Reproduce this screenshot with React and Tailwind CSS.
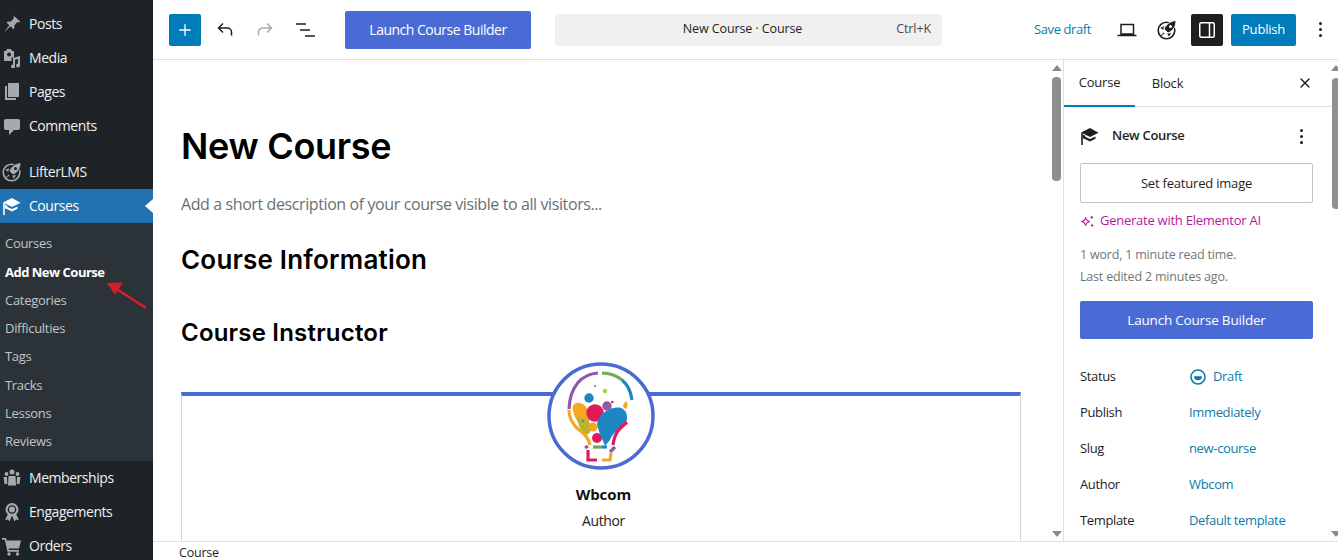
import { X, Plus } from 'lucide-react'

const BODY = "font-['Open_Sans',sans-serif]"

function PinIcon() {
  return (
    <svg viewBox="0 0 20 20" className="w-5 h-5" fill="#a7aaad">
      <path d="M11.5 1.5l6.8 6.2c-.9.7-2 .8-2.9.4l-3.2 3.4c.5 1.300.3 2.700-.7 3.800l-3-3-6.500 6.200 5.300-7.300-2.800-2.800c1.100-1 2.700-1.300 4-.6l3.300-3.300c-.5-1-.3-2.100.700-2.800z" />
    </svg>
  )
}

function MediaIcon() {
  return (
    <svg viewBox="0 0 20 20" className="w-5 h-5" fill="#a7aaad">
      <path d="M2 3h2l1-2h4l1 2h2v6.500H9.500V13H2z" />
      <circle cx="7" cy="6.500" r="2" fill="#1d2327" />
      <path d="M18 8v9.500a2 2 0 1 1-2-2V11l-3 .8v6.700a2 2 0 1 1-2-2v-6.500z" />
    </svg>
  )
}

function PagesIcon() {
  return (
    <svg viewBox="0 0 20 20" className="w-5 h-5" fill="#a7aaad">
      <path d="M6 1h11v14H6z" />
      <path d="M3 4h2v12h9v2H3z" />
    </svg>
  )
}

function CommentIcon() {
  return (
    <svg viewBox="0 0 20 20" className="w-5 h-5" fill="#a7aaad">
      <path d="M4 3h12a2 2 0 0 1 2 2v7a2 2 0 0 1-2 2h-4l-5 5v-5H4a2 2 0 0 1-2-2V5a2 2 0 0 1 2-2z" />
    </svg>
  )
}

function RocketBadge({ color = '#a7aaad', hole = '#1d2327', size = 'w-5 h-5' }) {
  return (
    <svg viewBox="0 0 20 20" className={size}>
      <circle cx="9.500" cy="10.500" r="8.300" fill="none" stroke={color} strokeWidth="1.600" />
      <path d="M19 .5C14 1 9 4 7 9l4 4c5-2 8-7 8-12.500z" fill={color} stroke={hole} strokeWidth=".9" />
      <path d="M7.500 5.500L2.800 8l3.700 2.200zM14.500 12.500L12 17.200 9.800 13.500z" fill={color} stroke={hole} strokeWidth=".6" />
      <circle cx="13.500" cy="6.500" r="1.500" fill={hole} />
      <path d="M2.500 17.500l4-5 1 1z" fill={color} />
    </svg>
  )
}

function CapIcon({ color = '#a7aaad', size = 'w-5 h-5' }) {
  return (
    <svg viewBox="0 0 20 20" className={size} fill={color}>
      <path d="M10 2L1 6.500l1.500.7L10 11l8.500-4.300z" />
      <path d="M4.500 10.500L10 13l5.500-2.500v2.300L10 15.500l-5.500-2.700z" />
      <path d="M1.200 7h1.600v12H1.200z" />
      <path d="M2.800 8.500l2.500 1.300v3.400l-2.500-.9z" />
    </svg>
  )
}

function GroupIcon() {
  return (
    <svg viewBox="0 0 20 20" className="w-5 h-5" fill="#a7aaad">
      <circle cx="10" cy="4" r="2.500" />
      <circle cx="4.500" cy="6" r="1.900" />
      <circle cx="15.500" cy="6" r="1.900" />
      <path d="M6.500 8h7l.5 9.500H6z" />
      <path d="M1.500 9h3.500l.3 7H2.500zM15 9h3.500l-1 7h-2.800z" />
    </svg>
  )
}

function AwardIcon() {
  return (
    <svg viewBox="0 0 20 20" className="w-5 h-5" fill="#a7aaad">
      <path d="M6 12l-3 6 3-.6 1.500 2 2.500-6 2.500 6 1.500-2 3 .6-3-6z" />
      <circle cx="10" cy="7.500" r="6.500" />
      <circle cx="10" cy="7.500" r="4.300" fill="#1d2327" />
      <circle cx="10" cy="7.500" r="3" />
    </svg>
  )
}

function CartIcon() {
  return (
    <svg viewBox="0 0 20 20" className="w-5 h-5" fill="#a7aaad">
      <path d="M0 2h4l.8 2.500H19l-2 8H6.500l.5 1.500h10v1.800H5.500L2.800 3.800H0z" />
      <circle cx="7" cy="18" r="1.700" />
      <circle cx="15.500" cy="18" r="1.700" />
    </svg>
  )
}

function MenuItem({ icon, label, active, className = '' }) {
  return (
    <div className={`relative h-[34px] flex items-center text-[14px] text-[#f0f0f1] ${active ? 'bg-[#2271b1] text-white' : ''} ${className}`}>
      <span className="w-[22px] mr-[7px] pl-[1px] flex justify-center shrink-0">{icon}</span>
      <span className="pb-[2px] tracking-[-0.45px]">{label}</span>
      {active && <span className="absolute right-0 top-[10px] border-y-[7px] border-y-transparent border-r-[8px] border-r-white" />}
    </div>
  )
}

function AdminSidebar() {
  const subItems = ['Courses', 'Add New Course', 'Categories', 'Difficulties', 'Tags', 'Tracks', 'Lessons', 'Reviews']
  return (
    <aside className="w-[153px] shrink-0 h-full bg-[#1d2327] overflow-hidden pt-[7px]">
      <MenuItem icon={<PinIcon />} label="Posts" />
      <MenuItem icon={<MediaIcon />} label="Media" />
      <MenuItem icon={<PagesIcon />} label="Pages" />
      <MenuItem icon={<CommentIcon />} label="Comments" className="mb-[12px]" />
      <MenuItem icon={<RocketBadge />} label="LifterLMS" />
      <MenuItem icon={<CapIcon color="#ffffff" />} label="Courses" active />
      <div className="bg-[#2c3338] pt-[7px] pb-[5px]">
        {subItems.map(item => (
          <div
            key={item}
            className={`h-[28.250px] flex items-center pl-[5px] text-[13px] ${item === 'Add New Course' ? 'font-bold text-white tracking-[-0.5px]' : 'text-[#c3c4c7] tracking-[-0.3px]'}`}
          >
            {item}
          </div>
        ))}
      </div>
      <MenuItem icon={<GroupIcon />} label="Memberships" />
      <MenuItem icon={<AwardIcon />} label="Engagements" />
      <MenuItem icon={<CartIcon />} label="Orders" />
    </aside>
  )
}

function TopBar() {
  return (
    <header className="h-[60px] shrink-0 border-b border-[#e0e0e0] flex items-center bg-white">
      <button className="ml-4 w-8 h-8 rounded-[2px] bg-[#007cba] flex items-center justify-center">
        <Plus size={18} color="#fff" strokeWidth={1.800} />
      </button>
      <svg viewBox="0 0 24 24" className="ml-[12px] w-6 h-6" fill="none" stroke="#1e1e1e" strokeWidth="1.500">
        <path d="M18.500 17.500v-3.500a4 4 0 0 0-4-4H6M10 5.500L5.500 10l4.500 4.500" />
      </svg>
      <svg viewBox="0 0 24 24" className="ml-[16px] w-6 h-6" fill="none" stroke="#a8a8a8" strokeWidth="1.500">
        <path d="M5.500 17.500v-3.500a4 4 0 0 1 4-4H18M14 5.500L18.500 10 14 14.500" />
      </svg>
      <svg viewBox="0 0 24 24" className="ml-[16px] w-6 h-6" fill="none" stroke="#1e1e1e" strokeWidth="1.500">
        <path d="M3 6h10M7 12h10M12 18h10" />
      </svg>
      <button className="ml-[28px] w-[186px] h-[38px] rounded-[2px] bg-[#4a6bd6] text-white text-[14px] tracking-[-0.5px]">
        Launch Course Builder
      </button>
      <div className="ml-[24px] w-[387px] h-[32px] rounded-[4px] bg-[#f0f0f0] flex items-center text-[12.500px] text-[#1e1e1e] relative">
        <span className="flex-1 text-center pr-[12px] tracking-[-0.1px]">New Course · Course</span>
        <span className="absolute right-[11px] text-[#4b4b4b] tracking-[-0.1px]">Ctrl+K</span>
      </div>
      <span className="ml-[92px] text-[13px] text-[#0b7bab] tracking-[-0.4px]">Save draft</span>
      <svg viewBox="0 0 24 24" className="ml-[24px] w-6 h-6" fill="none" stroke="#1e1e1e" strokeWidth="1.500">
        <path d="M6 6.500h12.500v9.500H6zM2.500 17.500h19" />
      </svg>
      <span className="ml-[18px] flex"><RocketBadge color="#1e1e1e" hole="#ffffff" size="w-[20px] h-[20px]" /></span>
      <button className="ml-[14px] w-8 h-8 rounded-[2px] bg-[#1e1e1e] flex items-center justify-center">
        <svg viewBox="0 0 24 24" className="w-6 h-6" fill="none" stroke="#fff" strokeWidth="1.500">
          <rect x="4.750" y="4.750" width="14.500" height="14.500" rx="1.500" />
          <path d="M14.500 5v14" />
        </svg>
      </button>
      <button className="ml-2 w-[65px] h-8 rounded-[2px] bg-[#007cba] text-white text-[13px] tracking-[-0.2px]">Publish</button>
      <div className="ml-[23px] flex flex-col gap-[3px] w-[3px]">
        <span className="h-[3px] w-[3px] rounded-full bg-[#1e1e1e]" />
        <span className="h-[3px] w-[3px] rounded-full bg-[#1e1e1e]" />
        <span className="h-[3px] w-[3px] rounded-full bg-[#1e1e1e]" />
      </div>
    </header>
  )
}

function Scrollbar({ thumbClass, className = '' }) {
  return (
    <div className={`relative shrink-0 bg-white ${className}`}>
      <span className="absolute top-[5px] left-1/2 -translate-x-1/2 border-x-[5px] border-x-transparent border-b-[6px] border-b-[#8a8a8a]" />
      <div className={`absolute bg-[#8f8f8f] rounded-[4px] ${thumbClass}`} />
      <span className="absolute bottom-[4px] left-1/2 -translate-x-1/2 border-x-[5px] border-x-transparent border-t-[6px] border-t-[#8a8a8a]" />
    </div>
  )
}

function BulbLogo() {
  return (
    <svg viewBox="0 0 108 108" className="w-[108px] h-[108px]">
      <circle cx="54" cy="54" r="52" fill="#fff" stroke="#4a6bcf" strokeWidth="3.500" />
      <path d="M26 49c-2-7 3-9 7-8 6 1 9 8 9 14 0 5 1 9-1 13-3 2-6-1-8-5-3-4-6-9-7-14z" fill="#f5a623" />
      <path d="M30 56c5-1 12 2 14 8 1 5-2 9-6 9-4-3-7-11-8-17z" fill="#b5b52e" />
      <circle cx="46" cy="65" r="4.500" fill="#f5a623" />
      <circle cx="42" cy="36" r="4.700" fill="#1f86c4" />
      <circle cx="58" cy="29" r="2.300" fill="#b5cc3a" />
      <circle cx="48" cy="24" r="1" fill="#8e5aa8" />
      <circle cx="36" cy="59" r="1" fill="#8e5aa8" />
      <circle cx="48" cy="51" r="8.700" fill="#e01b5c" />
      <circle cx="50" cy="76" r="5" fill="#e01b5c" />
      <path d="M50 62C52 50 66 44 74 46c6 2 8 10 4 16-6 6-12 8-15 16l-5 6c-2-6-6-12-8-22z" fill="#1f86c4" />
      <circle cx="60" cy="44" r="4.700" fill="#8e5aa8" />
      <circle cx="65.300" cy="40" r="1.300" fill="#e01b5c" />
      <path d="M79 39c2 2 2 6 0 8-2-1-3-2-3-4z" fill="#f5a623" />
      <g fill="none" strokeWidth="3.200">
        <path d="M51 11C35 12 23 24 22 47" stroke="#8e5aa8" />
        <path d="M55 11c8 0 15 3 20 7" stroke="#6cb04a" />
        <path d="M75 18c6 5 9 12 10 20" stroke="#1f86c4" />
        <path d="M22 48c0 8 3 12 7 17 5 5 12 8 14 18" stroke="#f5a623" />
        <path d="M80 60c-5 5-12 8-14 23" stroke="#e01b5c" />
        <path d="M38 86l3-2" stroke="#8e5aa8" />
        <path d="M41 88v10h9" stroke="#e01b5c" />
        <path d="M55 98h8l1-7" stroke="#f5a623" />
        <path d="M46 85h9" stroke="#6cb04a" />
        <path d="M55 85h5" stroke="#1f86c4" />
        <path d="M68 85l-5 5" stroke="#8e5aa8" />
      </g>
    </svg>
  )
}

function EditorCanvas() {
  return (
    <main className="flex-1 min-w-0 flex overflow-hidden">
      <div className="flex-1 min-w-0 pl-[28px] pr-[29px] overflow-hidden">
        <h1 className="mt-[62px] h-[48px] text-[36px] leading-[48px] font-semibold text-black font-['Inter',sans-serif] tracking-[-0.3px]">New Course</h1>
        <p className="mt-[22px] h-[24px] text-[16px] leading-[24px] text-[#6b6f73] tracking-[-0.4px]">Add a short description of your course visible to all visitors...</p>
        <h2 className="mt-[26px] h-[36px] text-[26px] leading-[36px] font-semibold text-black font-['Inter',sans-serif] tracking-[0.2px]">Course Information</h2>
        <h2 className="mt-[38px] h-[34px] text-[24px] leading-[34px] font-semibold text-black font-['Inter',sans-serif] tracking-[0.2px]">Course Instructor</h2>
        <div className="mt-[42px] w-[840px] h-[200px] border-t-4 border-[#4a6bcf] border-x border-x-[#d5d5d5] flex flex-col items-center">
          <div className="-mt-[34px] h-[108px] w-[108px] flex"><BulbLogo /></div>
          <div className="mt-[13px] ml-[5px] text-[15px] leading-[22px] font-bold text-[#111]">Wbcom</div>
          <div className="mt-[5px] ml-[5px] text-[14px] leading-[22px] text-[#222] tracking-[-0.4px]">Author</div>
        </div>
      </div>
      <Scrollbar className="w-[13px]" thumbClass="left-[2px] right-[2px] top-[17px] h-[104px]" />
    </main>
  )
}

function MetaRow({ label, children }) {
  return (
    <div className="h-[36px] flex items-center text-[13px] tracking-[-0.35px]">
      <span className="w-[109px] text-[#1e1e1e]">{label}</span>
      <span className="flex items-center text-[#0b7bab]">{children}</span>
    </div>
  )
}

function SettingsPanel() {
  return (
    <aside className="w-[275px] shrink-0 border-l border-[#e0e0e0] flex overflow-hidden">
      <div className="w-[268px] shrink-0">
        <div className="h-[47px] border-b border-[#e0e0e0] flex items-center text-[13px] tracking-[-0.2px] text-[#1e1e1e] relative">
          <div className="w-[71px] h-[47px] pt-[2px] flex items-center justify-center border-b-2 border-[#007cba]">Course</div>
          <div className="w-[65px] pt-[2px] text-center">Block</div>
          <X size={16} strokeWidth={2} color="#1e1e1e" className="absolute right-[19px]" />
        </div>
        <div className="pl-[16px] pr-[19px]">
          <div className="mt-[15px] h-[28px] flex items-center">
            <CapIcon color="#1e1e1e" size="w-5 h-5" />
            <span className="ml-[12px] text-[13px] font-semibold text-[#1e1e1e] tracking-[-0.3px]">New Course</span>
            <div className="ml-auto mr-[10px] flex flex-col gap-[3px]">
              <span className="h-[3px] w-[3px] rounded-full bg-[#1e1e1e]" />
              <span className="h-[3px] w-[3px] rounded-full bg-[#1e1e1e]" />
              <span className="h-[3px] w-[3px] rounded-full bg-[#1e1e1e]" />
            </div>
          </div>
          <button className="mt-[13px] pt-[2px] w-full h-[40px] border border-[#c4c4c4] rounded-[2px] text-[13px] text-[#1e1e1e] tracking-[-0.2px]">Set featured image</button>
          <div className="mt-[8px] h-[20px] flex items-center text-[13px] text-[#b5199b] tracking-[-0.25px]">
            <svg viewBox="0 0 16 16" className="w-[15px] h-[15px] mr-[5px]" fill="none" stroke="#b5199b" strokeWidth="1.200">
              <path d="M6 3.500c.5 3 1.500 4 4.500 4.500-3 .5-4 1.500-4.500 4.500-.5-3-1.500-4-4.500-4.500 3-.5 4-1.500 4.500-4.500z" />
              <path d="M12.500 2v3M11 3.500h3M13 11v2.500M11.800 12.200h2.400" />
            </svg>
            Generate with Elementor AI
          </div>
          <div className="mt-[13px] text-[12.500px] leading-[22px] text-[#757575] tracking-[-0.2px]">
            <div>1 word, 1 minute read time.</div>
            <div>Last edited 2 minutes ago.</div>
          </div>
          <button className="mt-[13px] w-full h-[38px] rounded-[2px] bg-[#4a6bd6] text-white text-[13.500px] tracking-[-0.2px]">Launch Course Builder</button>
          <div className="mt-[20px]">
            <MetaRow label="Status">
              <svg viewBox="0 0 18 18" className="w-[18px] h-[18px] mr-[6px]" fill="none" stroke="#0b7bab" strokeWidth="1.600">
                <circle cx="9" cy="9" r="7" />
                <path d="M5 8.200h8a4 4 0 0 1-8 0z" fill="#0b7bab" stroke="none" />
              </svg>
              Draft
            </MetaRow>
            <MetaRow label="Publish">Immediately</MetaRow>
            <MetaRow label="Slug">new-course</MetaRow>
            <MetaRow label="Author">Wbcom</MetaRow>
            <MetaRow label="Template">Default template</MetaRow>
          </div>
        </div>
      </div>
      <Scrollbar className="w-[8px]" thumbClass="left-0 right-0 top-[18px] h-[131px]" />
    </aside>
  )
}

export default function App() {
  return (
    <div className={`relative w-[1338px] h-[560px] flex overflow-hidden bg-white ${BODY}`}>
      <AdminSidebar />
      <div className="flex-1 min-w-0 h-full flex flex-col">
        <TopBar />
        <div className="flex-1 min-h-0 flex">
          <EditorCanvas />
          <SettingsPanel />
        </div>
        <footer className="h-[19px] shrink-0 border-t border-[#e0e0e0] bg-white pl-[26px] pt-[4px] text-[12.500px] leading-[14px] text-[#1e1e1e] tracking-[-0.2px]">Course</footer>
      </div>
      {/* annotation arrow from the tutorial screenshot */}
      <svg viewBox="0 0 44 32" className="absolute left-[105px] top-[279px] w-[44px] h-[32px]">
        <path d="M41 29L10 9" stroke="#d81e28" strokeWidth="2.600" />
        <path d="M2 4l16-.5-8 12z" fill="#d81e28" />
      </svg>
    </div>
  )
}
